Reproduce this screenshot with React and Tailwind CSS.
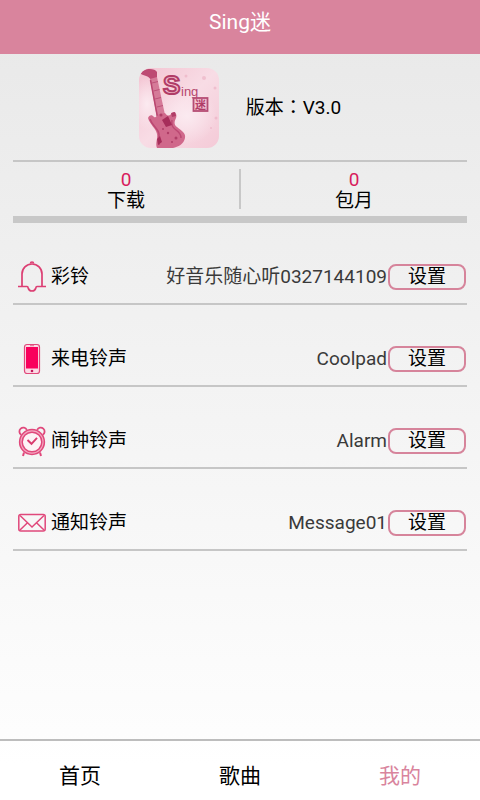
const settings = [
    { id: 'color', label: '彩铃', value: '好音乐随心听0327144109', Icon: BellIcon },
    { id: 'call', label: '来电铃声', value: 'Coolpad', Icon: PhoneIcon },
    { id: 'alarm', label: '闹钟铃声', value: 'Alarm', Icon: AlarmIcon },
    { id: 'notice', label: '通知铃声', value: 'Message01', Icon: MailIcon },
]

const tabs = [
    { id: 'home', label: '首页' },
    { id: 'songs', label: '歌曲' },
    { id: 'mine', label: '我的', active: true },
]

function BellIcon() {
    return (
        <svg viewBox="0 0 30 32" className="h-8 w-[30px] shrink-0" fill="none" stroke="#dc3f73" strokeWidth="1.700" aria-hidden="true">
            <path d="M5 25V13a10 10 0 0 1 20 0v12" />
            <path d="M1 25.500h9c1 0 1 .5 1.200 1.500a3.900 3.900 0 0 0 7.600 0c.2-1 .2-1.500 1.200-1.500h9" />
            <path d="M13.500 2.500a1.500 1.500 0 0 1 3 0" />
        </svg>
    )
}

function PhoneIcon() {
    return (
        <svg viewBox="0 0 30 32" className="h-8 w-[30px] shrink-0" fill="none" aria-hidden="true">
            <rect x="7.500" y="1.500" width="15" height="29" rx="2.500" fill="#fbdbe5" stroke="#e0487b" strokeWidth="1.200" />
            <rect x="9" y="4" width="12" height="21.500" fill="#f9005c" />
            <path d="M13 2.700h4" stroke="#e0487b" strokeWidth="0.800" />
            <circle cx="15" cy="28" r="1.300" fill="#c2185b" />
        </svg>
    )
}

function AlarmIcon() {
    return (
        <svg viewBox="0 0 30 32" className="h-8 w-[30px] shrink-0" fill="none" stroke="#e0487b" strokeWidth="1.500" aria-hidden="true">
            <circle cx="15" cy="17" r="12.400" fill="#f4a9c1" />
            <circle cx="15" cy="17" r="9.800" fill="#fdf3f6" />
            <path d="M4.200 9.800a3.900 3.900 0 1 1 5.600-5M25.800 9.800a3.900 3.900 0 1 0-5.600-5" strokeWidth="1.800" />
            <path d="M10.500 15l4 3.800 5.500-6" stroke="#d93a6e" strokeWidth="1.900" />
            <path d="M7 27.500l-1 3.500M23 27.500l1 3.500" strokeWidth="2" />
        </svg>
    )
}

function MailIcon() {
    return (
        <svg viewBox="0 0 30 32" className="h-8 w-[30px] shrink-0" fill="none" stroke="#e0487b" strokeWidth="1.500" aria-hidden="true">
            <rect x="1.800" y="7.500" width="26.400" height="16.500" rx="2" />
            <path d="M3 8.500l12 11.500L27 8.500M3 23l7.500-7.300M27 23l-7.500-7.300" />
        </svg>
    )
}

function Logo() {
    return (
        <svg viewBox="0 0 80 80" className="size-20 shrink-0 rounded-xl" role="img" aria-label="Sing迷">
            <defs>
                <linearGradient id="paper" x1="0" y1="0" x2="1" y2="1">
                    <stop offset="0" stopColor="#f3c4d2" />
                    <stop offset="0.500" stopColor="#f8dce5" />
                    <stop offset="1" stopColor="#f4cad7" />
                </linearGradient>
                <radialGradient id="glow">
                    <stop offset="0" stopColor="#fbeaf0" />
                    <stop offset="1" stopColor="#fbeaf0" stopOpacity="0" />
                </radialGradient>
            </defs>
            <rect width="80" height="80" fill="url(#paper)" />
            <ellipse cx="48" cy="48" rx="30" ry="28" fill="url(#glow)" />
            <ellipse cx="8" cy="36" rx="16" ry="26" fill="url(#glow)" />
            <g fill="#e8a5ba" opacity="0.500">
                <circle cx="65" cy="10" r="2" />
                <circle cx="77" cy="50" r="1.500" />
                <circle cx="47" cy="8" r="1.500" />
                <circle cx="76" cy="20" r="1.500" />
                <circle cx="72" cy="60" r="1" />
            </g>
            <path d="M2 6c0-3 5-5 9-5 3 0 6 1 7 3v6l-6 2C10 8 6 8 2 6z" fill="#bd4a73" />
            <path d="M11 11l7-2 8 38-8 3z" fill="#d57a98" />
            <path d="M11.500 12l7 37" stroke="#b94670" strokeWidth="1.500" />
            <path d="M13 15l6-1.500M14.500 23l6-1.500M16 31l6-1.500M18 39l6-1.500" stroke="#bd5279" strokeWidth="1" />
            <path d="M9 50c1-3 4-4 6-1 2 1 3-1 5-3l6-1c3 4 5 3 8-1 3 0 4 3 3 6-2 4-2 7 1 9 5 4 9 6 8 11-1 6-7 9-12 10H18c-2-5 1-9 0-14-1-6-7-9-9-16z" fill="#d0688b" />
            <path d="M11 51c2 7 8 9 9 15v11M33 52c-1 5 1 8 4 10s5 5 5 8" fill="none" stroke="#bb4872" strokeWidth="1.500" />
            <path d="M23 52l6-4 4 9-6 2zM18 71l3-3 2 6-4 3z" fill="#a62d5a" />
            <path d="M32 45l4-1 1 4-4 1z" fill="#b13d67" />
            <g fill="#af3e67">
                <circle cx="29" cy="65" r="1.200" />
                <circle cx="37" cy="70" r="1.500" />
                <circle cx="24" cy="61" r="1" />
                <circle cx="33" cy="74" r="1" />
                <circle cx="22" cy="47" r="1.500" />
            </g>
            <text x="24" y="26" fontSize="26" fontWeight="700" fontFamily="Liberation Sans, sans-serif" fill="#f3b9cb" stroke="#b03c67" strokeWidth="2">S</text>
            <text x="42" y="28" fontSize="13" fontFamily="Liberation Sans, sans-serif" fill="#b5486f">ing</text>
            <rect x="54.500" y="30" width="14" height="13" fill="#f3c3d2" stroke="#b54d74" strokeWidth="1.800" />
            <text x="56" y="40.500" fontSize="11" fontWeight="700" fontFamily="Noto Sans CJK SC, sans-serif" fill="#b03c67">迷</text>
        </svg>
    )
}

function Stat({ count, label }) {
    return (
        <div className="flex-1 text-center text-[19px] leading-[21px]">
            <p className="text-[#d81b5c]">{count}</p>
            <p>{label}</p>
        </div>
    )
}

function SettingRow({ id, label, value, Icon }) {
    return (
        <li className="flex items-center border-b-2 border-[#c6c6c6] pt-[38px] pb-2.5 pl-1">
            <Icon />
            <span id={id} className="ml-1 h-7 shrink-0 text-[19px] leading-7">{label}</span>
            <span className="h-7 min-w-0 flex-1 truncate text-right text-[19px] leading-7 text-[#3a3a3a]">{value}</span>
            <button type="button" aria-describedby={id} className="mr-px ml-px h-[26px] w-[78px] shrink-0 rounded-lg border-2 border-[#d6849b] text-[19px] leading-[22px]">
                设置
            </button>
        </li>
    )
}

const App = () => {
    return (
        <div className="flex min-h-screen flex-col bg-linear-to-b from-[#e8e8e8] to-white font-[Roboto,'Noto_Sans_CJK_SC',sans-serif] text-black">
            <header className="bg-[#d9849d] pt-[7px] pb-[17px] text-center text-white">
                <h1 className="text-[21px] leading-[30px]">Sing迷</h1>
            </header>

            <main className="flex-1 px-[13px]">
                <section className="flex items-center justify-center gap-[27px] border-b-2 border-[#c6c6c6] pt-3.5 pb-3">
                    <Logo />
                    <p className="font-[Roboto,'Noto_Sans_CJK_TC',sans-serif] text-[19px] leading-7">版本：V3.0</p>
                </section>

                <section className="flex items-start border-b-[7px] border-[#c8c8c8] pt-[7px] pb-[5px]">
                    <Stat count={0} label="下载" />
                    <div className="h-10 w-0.5 bg-[#c8c8c8]" />
                    <Stat count={0} label="包月" />
                </section>

                <ul>
                    {settings.map((item) => (
                        <SettingRow key={item.id} {...item} />
                    ))}
                </ul>
            </main>

            <nav className="flex border-t-2 border-[#bdbdbd] bg-white/60">
                {tabs.map((tab) => (
                    <a
                        key={tab.id}
                        href={`#${tab.id}`}
                        aria-current={tab.active ? 'page' : undefined}
                        className={tab.active
                            ? 'flex-1 pt-5 pb-[9px] text-center text-[21px] leading-[30px] text-[#d9849d]'
                            : 'flex-1 pt-5 pb-[9px] text-center text-[21px] leading-[30px]'}
                    >
                        {tab.label}
                    </a>
                ))}
            </nav>
        </div>
    )
}

export default App
